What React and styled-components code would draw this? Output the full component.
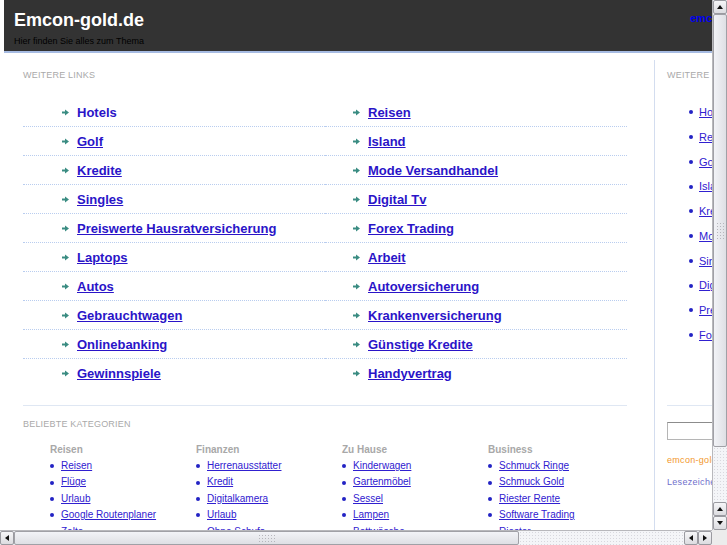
import React from 'react'
import styled, { createGlobalStyle } from 'styled-components'

const mainLinks = [
  ['Hotels', 'Reisen'],
  ['Golf', 'Island'],
  ['Kredite', 'Mode Versandhandel'],
  ['Singles', 'Digital Tv'],
  ['Preiswerte Hausratversicherung', 'Forex Trading'],
  ['Laptops', 'Arbeit'],
  ['Autos', 'Autoversicherung'],
  ['Gebrauchtwagen', 'Krankenversicherung'],
  ['Onlinebanking', 'Günstige Kredite'],
  ['Gewinnspiele', 'Handyvertrag'],
]

const sideLinks = [
  'Hotels', 'Reisen', 'Golf', 'Island', 'Kredite',
  'Mode Versandhandel', 'Singles', 'Digital Tv',
  'Preiswerte Hausratversicherung', 'Forex Trading',
]

const categories = [
  { title: 'Reisen', items: ['Reisen', 'Flüge', 'Urlaub', 'Google Routenplaner', 'Zelte', 'Last Minute'] },
  { title: 'Finanzen', items: ['Herrenausstatter', 'Kredit', 'Digitalkamera', 'Urlaub', 'Ohne Schufa', 'Girokonto'] },
  { title: 'Zu Hause', items: ['Kinderwagen', 'Gartenmöbel', 'Sessel', 'Lampen', 'Bettwäsche', 'Möbel'] },
  { title: 'Business', items: ['Schmuck Ringe', 'Schmuck Gold', 'Riester Rente', 'Software Trading', 'Riester', 'Aktien'] },
]

const Global = createGlobalStyle`
  html, body {
    margin: 0;
    padding: 0;
    overflow: hidden;
    background: #fff;
  }
  body {
    font-family: "Liberation Sans", Arial, sans-serif;
  }
`

const Frame = styled.div`
  display: grid;
  grid-template-columns: 712px 15px;
  grid-template-rows: 530px 15px;
  width: 727px;
  height: 545px;
  overflow: hidden;
`

const Viewport = styled.div`
  overflow: hidden;
  background: #fff;
`

const Page = styled.div`
  width: 930px;
  margin-left: 4px;
`

const Header = styled.header`
  display: grid;
  grid-template-columns: 651px 1fr;
  height: 51px;
  background: #333;
  border-bottom: 2px solid #a6bbe2;
`

const Brand = styled.div`
  padding: 10px 0 0 10px;
`

const Title = styled.h1`
  margin: 0;
  font-size: 18px;
  line-height: 20px;
  font-weight: bold;
  color: #fff;
`

const Tagline = styled.div`
  margin-top: 6px;
  font-size: 9px;
  line-height: 11px;
  color: #000;
`

const HeaderAside = styled.a`
  padding: 12px 0 0 35px;
  font-size: 11px;
  line-height: 13px;
  font-weight: bold;
  color: #0000ee;
  text-decoration: none;
  white-space: nowrap;
`

const Main = styled.div`
  display: grid;
  grid-template-columns: 651px 260px;
  margin-top: 7px;
`

const Content = styled.div`
  border-right: 1px solid #d3ddef;
  padding: 10px 27px 0 19px;
`

const Sidebar = styled.aside`
  padding: 10px 0 0 12px;
`

const SectionLabel = styled.div`
  font-size: 9px;
  line-height: 11px;
  letter-spacing: 0.2px;
  color: #a9a9a9;
  text-transform: uppercase;
  white-space: nowrap;
`

const LinkGrid = styled.div`
  display: grid;
  grid-template-columns: 302px 302px;
  margin-top: 17px;
`

const LinkCell = styled.div`
  display: flex;
  align-items: center;
  gap: 8px;
  height: 28px;
  padding-left: ${p => p.$indent}px;
  border-bottom: 1px dotted #b9cdef;
  &:nth-last-child(-n + 2) {
    border-bottom: 1px solid transparent;
  }
`

const BigLink = styled.a`
  font-size: 13px;
  font-weight: bold;
  color: #2a14c8;
  text-decoration: ${p => (p.$plain ? 'none' : 'underline')};
  white-space: nowrap;
`

const Rule = styled.hr`
  margin: ${p => p.$top}px 0 13px;
  border: 0;
  border-top: 1px solid #dfe7f3;
  height: 0;
`

const CategoryGrid = styled.div`
  display: grid;
  grid-template-columns: repeat(4, 146px);
  padding-left: 27px;
  margin-top: 14px;
`

const CategoryTitle = styled.div`
  font-size: 10px;
  line-height: 12px;
  font-weight: bold;
  color: #a8a8a8;
`

const List = styled.ul`
  margin: ${p => p.$top}px 0 0;
  padding: 0 0 0 ${p => p.$indent || 0}px;
  list-style: none;
`

const Item = styled.li`
  display: flex;
  align-items: center;
  gap: ${p => p.$gap}px;
  line-height: ${p => p.$height}px;
  font-size: ${p => p.$size}px;
  white-space: nowrap;
  &::before {
    content: '';
    flex: none;
    width: 4px;
    height: 4px;
    border-radius: 50%;
    background: #2323c4;
  }
`

const SmallLink = styled.a`
  color: #3020d0;
  text-decoration: underline;
`

const SearchBox = styled.input`
  display: block;
  width: 150px;
  height: 18px;
  margin: 16px 0 0;
  padding: 0;
  box-sizing: border-box;
  border: 1px solid #b5b5b5;
  border-top-color: #8c8c8c;
  background: #fff;
`

const SiteName = styled.div`
  margin-top: 15px;
  font-size: 9px;
  line-height: 11px;
  color: #f2982c;
  letter-spacing: 0.3px;
`

const Bookmark = styled.div`
  margin-top: 11px;
  font-size: 9px;
  line-height: 11px;
  color: #6f6fcc;
  letter-spacing: 0.3px;
`

/* drawn scrollbars of the old browser window */

const VBar = styled.div`
  display: flex;
  flex-direction: column;
  background: #eceef2;
  border-left: 1px solid #b8b8bc;
  box-sizing: border-box;
`

const HBar = styled.div`
  display: flex;
  background: #eceef2;
  border-top: 1px solid #b8b8bc;
  box-sizing: border-box;
`

const Corner = styled.div`
  background: #ececec;
`

const Track = styled.div`
  flex: 1;
  background-color: #f4f5f8;
  background-image: radial-gradient(#d8d8de 0.6px, transparent 0.8px);
  background-size: 3px 3px;
`

const ArrowButton = styled.div`
  flex: none;
  display: flex;
  align-items: center;
  justify-content: center;
  width: 14px;
  height: 14px;
  box-sizing: border-box;
  border: 1px solid #9a9aa0;
  border-radius: 2px;
  background: linear-gradient(#f6f6f8, #dcdce0);
`

const Thumb = styled.div`
  flex: none;
  display: flex;
  align-items: center;
  justify-content: center;
  box-sizing: border-box;
  ${p => (p.$horizontal ? `width: ${p.$size}px; height: 14px;` : `height: ${p.$size}px; width: 14px;`)}
  border: 1px solid #a0a0a6;
  border-radius: 2px;
  background: ${p =>
    p.$horizontal
      ? 'linear-gradient(#f2f3f7, #dedfe4)'
      : 'linear-gradient(to right, #f2f3f7, #dedfe4)'};
`

const Grip = styled.div`
  width: ${p => (p.$horizontal ? 17 : 9)}px;
  height: ${p => (p.$horizontal ? 9 : 17)}px;
  background-image: radial-gradient(#b6b6bc 0.7px, transparent 0.9px);
  background-size: 3px 3px;
`

const Arrow = ({ dir }) => {
  const shapes = {
    up: '1,6 4,2 7,6',
    down: '1,2 4,6 7,2',
    left: '6,1 2,4 6,7',
    right: '2,1 6,4 2,7',
  }
  return (
    <svg width="8" height="8" viewBox="0 0 8 8">
      <polygon points={shapes[dir]} fill="#111" />
    </svg>
  )
}

const TealArrow = () => (
  <svg width="7" height="7" viewBox="0 0 7 7" style={{ flex: 'none' }}>
    <rect x="0" y="2.5" width="4" height="2" fill="#3a8c82" />
    <polygon points="3,0.5 7,3.5 3,6.5" fill="#3a8c82" />
  </svg>
)

export default function App() {
  return (
    <Frame>
      <Global />
      <Viewport>
        <Page>
          <Header>
            <Brand>
              <Title>Emcon-gold.de</Title>
              <Tagline>Hier finden Sie alles zum Thema</Tagline>
            </Brand>
            <HeaderAside href="#">emcon-gold.de</HeaderAside>
          </Header>
          <Main>
            <Content>
              <SectionLabel>Weitere Links</SectionLabel>
              <LinkGrid>
                {mainLinks.map(([a, b], i) => (
                  <React.Fragment key={a}>
                    <LinkCell $indent={39}>
                      <TealArrow />
                      <BigLink href="#" $plain={i === 0}>{a}</BigLink>
                    </LinkCell>
                    <LinkCell $indent={28}>
                      <TealArrow />
                      <BigLink href="#">{b}</BigLink>
                    </LinkCell>
                  </React.Fragment>
                ))}
              </LinkGrid>
              <Rule $top={17} />
              <SectionLabel>Beliebte Kategorien</SectionLabel>
              <CategoryGrid>
                {categories.map(cat => (
                  <div key={cat.title}>
                    <CategoryTitle>{cat.title}</CategoryTitle>
                    <List $top={2}>
                      {cat.items.map(it => (
                        <Item key={it} $gap={7} $height={16.4} $size={10}>
                          <SmallLink href="#">{it}</SmallLink>
                        </Item>
                      ))}
                    </List>
                  </div>
                ))}
              </CategoryGrid>
            </Content>
            <Sidebar>
              <SectionLabel>Weitere Links</SectionLabel>
              <List $top={19} $indent={22}>
                {sideLinks.map(it => (
                  <Item key={it} $gap={6} $height={24.75} $size={11}>
                    <SmallLink href="#">{it}</SmallLink>
                  </Item>
                ))}
              </List>
              <Rule $top={57} />
              <SearchBox type="text" />
              <SiteName>emcon-gold.de</SiteName>
              <Bookmark>Lesezeichen</Bookmark>
            </Sidebar>
          </Main>
        </Page>
      </Viewport>
      <VBar>
        <ArrowButton><Arrow dir="up" /></ArrowButton>
        <Thumb $size={433}><Grip /></Thumb>
        <Track />
        <ArrowButton><Arrow dir="up" /></ArrowButton>
        <ArrowButton><Arrow dir="down" /></ArrowButton>
      </VBar>
      <HBar>
        <ArrowButton><Arrow dir="left" /></ArrowButton>
        <Thumb $horizontal $size={505}><Grip $horizontal /></Thumb>
        <Track />
        <ArrowButton><Arrow dir="left" /></ArrowButton>
        <ArrowButton><Arrow dir="right" /></ArrowButton>
      </HBar>
      <Corner />
    </Frame>
  )
}
